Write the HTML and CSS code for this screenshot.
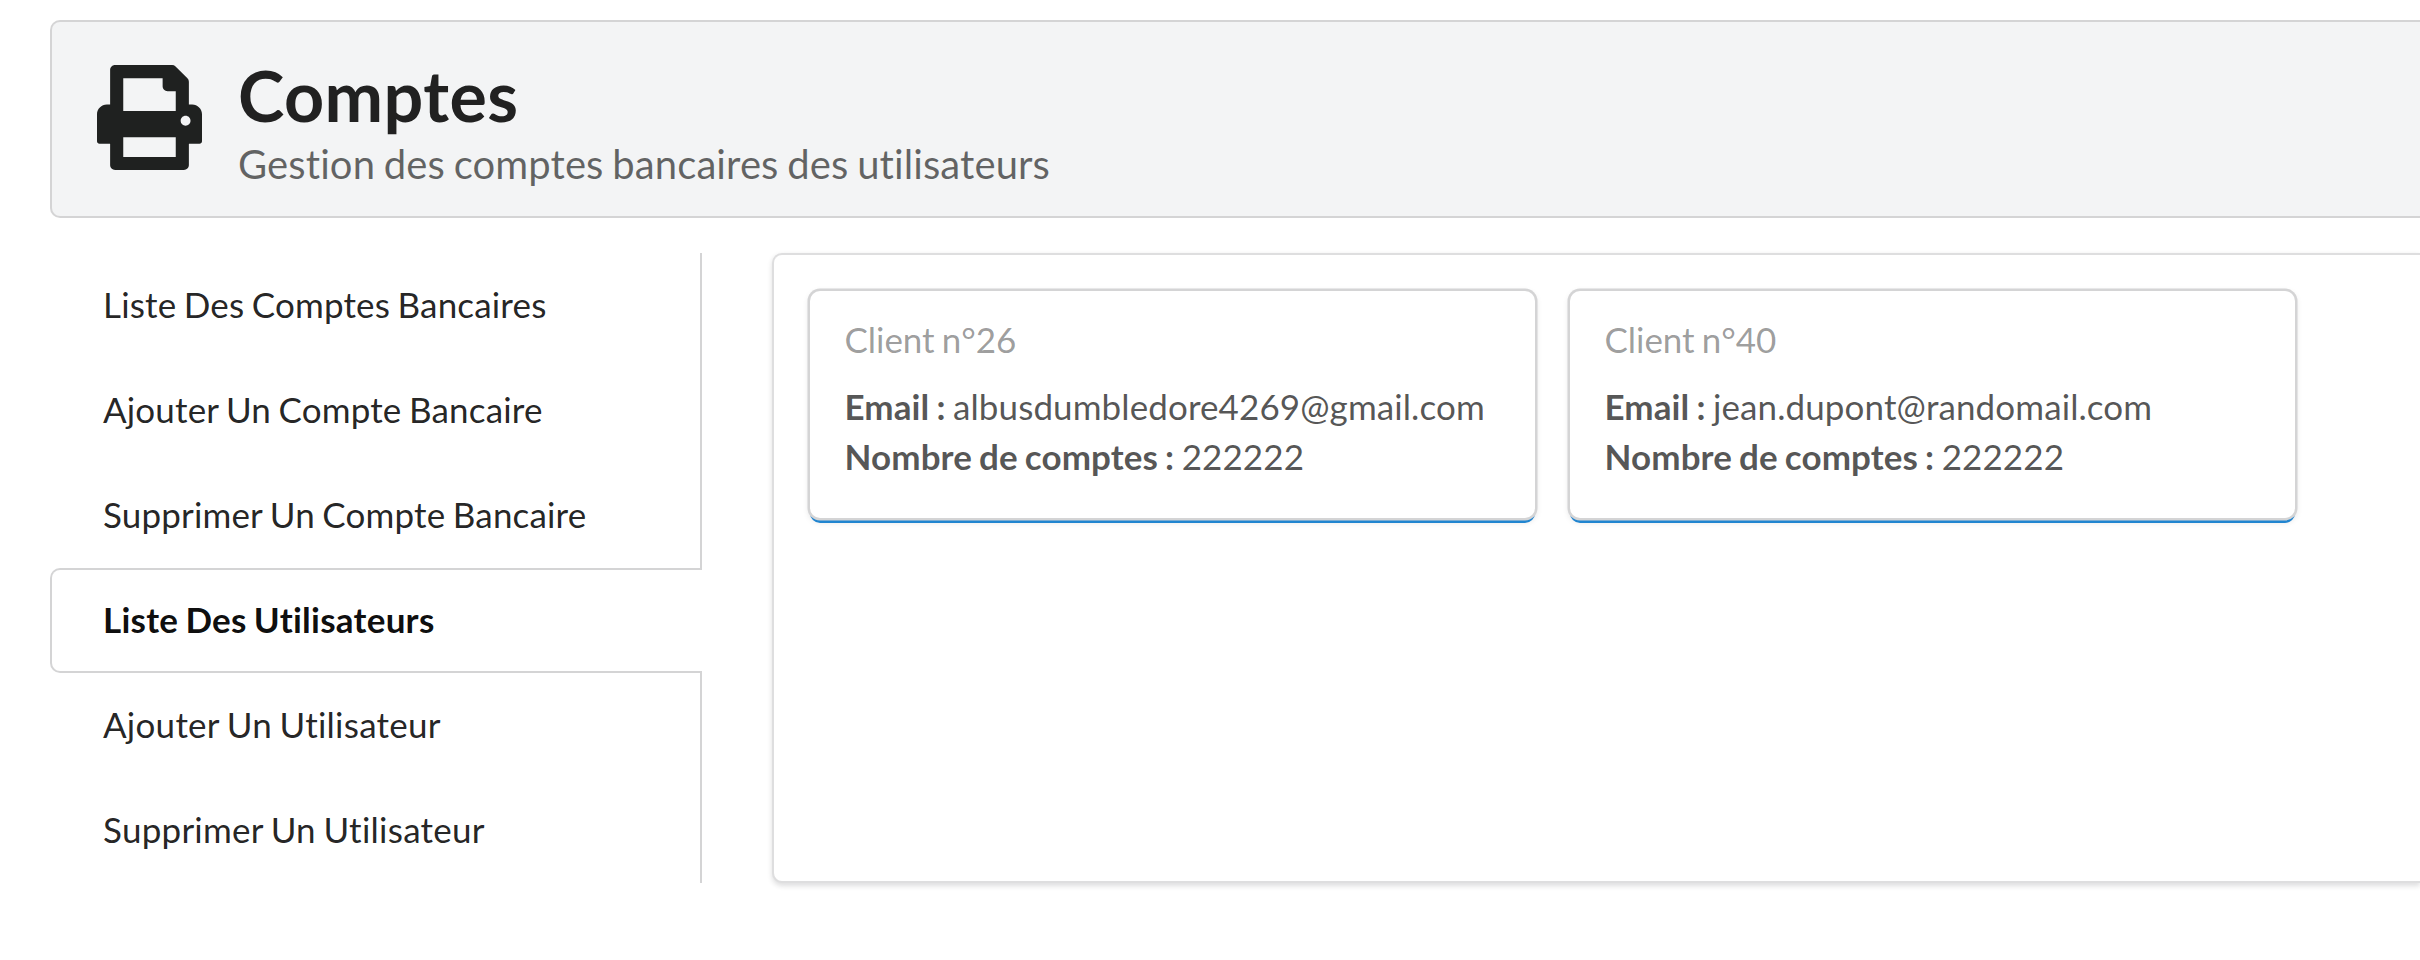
FILE: index.html
```html
<!DOCTYPE html>
<html lang="fr">
<head>
<meta charset="utf-8">
<title>Comptes</title>
<link rel="stylesheet" href="styles.css">
</head>
<body>
<div class="page">
  <header class="banner">
    <svg class="banner-icon" viewBox="0 0 512 512" aria-hidden="true"><path d="M464 192h-16V81.941a24 24 0 0 0-7.029-16.97L383.03 7.029A24 24 0 0 0 366.059 0H88C74.745 0 64 10.745 64 24v168H48c-26.51 0-48 21.49-48 48v132c0 6.627 5.373 12 12 12h52v104c0 13.255 10.745 24 24 24h336c13.255 0 24-10.745 24-24V384h52c6.627 0 12-5.373 12-12V240c0-26.51-21.49-48-48-48zm-80 256H128v-96h256v96zM384 224H128V64h192v40c0 13.2 10.8 24 24 24h40v96zm48 72c-13.2 0-24-10.8-24-24s10.8-24 24-24 24 10.8 24 24-10.8 24-24 24z"/></svg>
    <div class="banner-text">
      <h1 class="title">Comptes</h1>
      <p class="subtitle">Gestion des comptes bancaires des utilisateurs</p>
    </div>
  </header>
  <div class="content">
    <nav class="menu">
      <a class="item">Liste Des Comptes Bancaires</a>
      <a class="item">Ajouter Un Compte Bancaire</a>
      <a class="item">Supprimer Un Compte Bancaire</a>
      <a class="item user active">Liste Des Utilisateurs</a>
      <a class="item user">Ajouter Un Utilisateur</a>
      <a class="item user">Supprimer Un Utilisateur</a>
    </nav>
    <main class="panel">
      <article class="card">
        <div class="meta">Client n°26</div>
        <div class="description"><b>Email :</b> albusdumbledore4269@gmail.com<br><b>Nombre de comptes :</b> 222222</div>
      </article>
      <article class="card">
        <div class="meta">Client n°40</div>
        <div class="description"><b>Email :</b> jean.dupont@randomail.com<br><b>Nombre de comptes :</b> 222222</div>
      </article>
    </main>
  </div>
</div>
</body>
</html>
```
FILE: styles.css
```css
* { box-sizing: border-box; }
html { overflow: hidden; }
body {
  margin: 0;
  height: 960px;
  overflow: hidden;
  background: #fff;
  color: rgba(0, 0, 0, .87);
  font: 35px/50px Lato, "Liberation Sans", sans-serif;
  font-variant-ligatures: none;
  letter-spacing: .1px;
  word-spacing: -1.6px;
}
.page {
  width: 100%;
  padding: 20px 0 0 50px;
}
.banner {
  display: flex;
  align-items: flex-start;
  gap: 36px;
  height: 198px;
  padding: 28px 0 0 45px;
  border: 2px solid #d4d4d5;
  border-right: 0;
  border-radius: 10px 0 0 10px;
  background: #f3f4f5;
}
.banner-icon {
  width: 105px;
  height: 105px;
  margin-top: 15px;
  fill: #1f2120;
}
.title {
  margin: 0;
  font-size: 70px;
  line-height: 90px;
  font-weight: 700;
  letter-spacing: .4px;
  color: #212121;
}
.subtitle {
  margin: 0;
  font-size: 40px;
  line-height: 48px;
  color: rgba(0, 0, 0, .6);
}
.content {
  display: flex;
  gap: 70px;
  margin-top: 35px;
  height: 630px;
}
.menu {
  display: flex;
  flex-direction: column;
  width: 652px;
  letter-spacing: .16px;
}
.item {
  height: 105px;
  padding: 34px 50px 0 53px;
  line-height: 35px;
  border-right: 2px solid #d4d4d5;
}
.item.user { letter-spacing: .25px; }
.item.active {
  padding: 32px 50px 0 51px;
  border: 2px solid #d4d4d5;
  border-right: 0;
  border-radius: 10px 0 0 10px;
  font-weight: 700;
  color: rgba(0, 0, 0, .95);
}
.panel {
  flex: 1;
  display: flex;
  align-items: flex-start;
  gap: 35px;
  padding: 36px 0 0 36px;
  border: 2px solid #dededf;
  border-right: 0;
  border-radius: 10px 0 0 10px;
  background: #fff;
  box-shadow: 0 2.5px 5px 0 rgba(34, 36, 38, .15);
}
.card {
  width: 725px;
  height: 227px;
  padding: 23px 35px 0 34.5px;
  border-radius: 10px;
  background: #fff;
  box-shadow: 0 0 0 2.5px #d4d4d5, 0 5px 0 0 #2185d0, 0 2.5px 7.5px 0 #d4d4d5;
}
.meta {
  letter-spacing: -.05px;
  color: rgba(0, 0, 0, .4);
}
.description {
  margin-top: 17px;
  color: rgba(0, 0, 0, .68);
}
```
